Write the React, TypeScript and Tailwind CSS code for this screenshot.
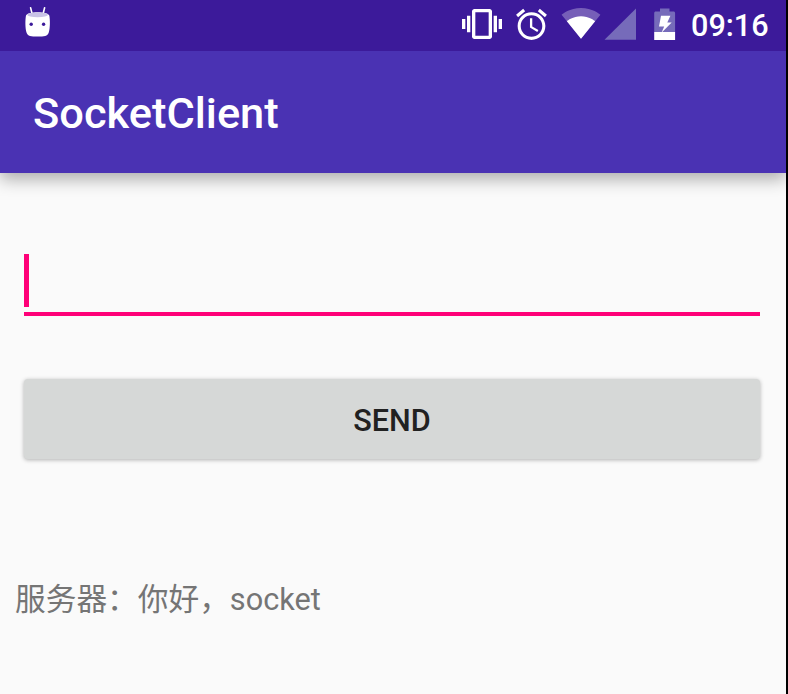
function StatusBar() {
  return (
    <header className="flex h-[51px] items-start bg-[#3c1a9a]">
      <svg className="ml-[24px] mt-[6px] h-[32px] w-[27px]" viewBox="24 6 27 32">
        <path d="M30.6 7.8l1.3 5.2M44.6 7.8l-1.3 5.2" stroke="#fff" strokeWidth="1.6" strokeLinecap="round" />
        <path d="M26 15.500c2-4.200 21.300-4.200 23.300 0 .9 4.500.9 13-.6 17.300-1 3.300-4.500 3.800-11.100 3.800s-10-.5-11-3.800c-1.500-4.300-1.500-12.800-.6-17.300z" fill="#fff" />
        <ellipse cx="37.600" cy="14.800" rx="10.400" ry="2.400" fill="#c9c3e6" />
        <circle cx="31.200" cy="24.300" r="1.700" fill="#3c1a9a" />
        <circle cx="43.600" cy="24.300" r="1.700" fill="#3c1a9a" />
      </svg>
      <svg className="ml-[411px] mt-[4px] size-[40px]" viewBox="0 0 24 24" fill="#fff">
        <path d="M0 15h2V9H0v6zm3 2h2V7H3v10zm19-8v6h2V9h-2zm-3 8h2V7h-2v10zM16.5 3h-9C6.670 3 6 3.670 6 4.500v15c0 .83.67 1.500 1.500 1.500h9c.83 0 1.500-.67 1.500-1.500v-15c0-.83-.67-1.500-1.500-1.500zM16 19H8V5h8v14z" />
      </svg>
      <svg className="ml-[11px] mt-[6px] size-[37px]" viewBox="0 0 24 24" fill="#fff">
        <path d="M22 5.720l-4.600-3.860-1.290 1.530 4.600 3.860L22 5.720zM7.880 3.390L6.600 1.860 2 5.710l1.290 1.530 4.590-3.850zM12.500 8H11v6l4.750 2.850.75-1.230-4-2.370V8zM12 4c-4.970 0-9 4.030-9 9s4.020 9 9 9c4.970 0 9-4.030 9-9s-4.030-9-9-9zm0 16c-3.870 0-7-3.130-7-7s3.130-7 7-7 7 3.130 7 7-3.130 7-7 7z" />
      </svg>
      <svg className="ml-[11px] mt-[3px] size-[40px]" viewBox="0 0 24 24" fill="#fff">
        <path fillOpacity=".3" d="M12.010 21.490L23.640 7c-.45-.34-4.930-4-11.640-4C5.280 3 .81 6.660.36 7l11.630 14.490.01.01.01-.01z" />
        <path d="M3.530 10.950l8.460 10.540.01.01.01-.01 8.460-10.540C20.040 10.620 16.810 8 12 8c-4.810 0-8.040 2.620-8.470 2.950z" />
      </svg>
      <svg className="ml-[3px] mt-[8px] h-[32px] w-[32px]" viewBox="604 8 32 32">
        <path d="M604.500 39.700H636V8.400z" fill="#766bba" />
      </svg>
      <svg className="ml-[18px] mt-[8px] h-[32px] w-[22px]" viewBox="654 8 22 32">
        <path d="M660 8.600h9.500v3h4c1 0 1.600.6 1.600 1.500V32.200H654.200V13.100c0-.9.600-1.500 1.500-1.500H660z" fill="#766bba" />
        <path d="M654.200 32h20.900v8h-20.900z" fill="#fff" />
        <path d="M661 15.800h9.400l-3.100 6.600h4.400l-10.200 10.400 2.700-6.300H659z" fill="#fff" />
      </svg>
      <time className="ml-[15px] mt-[7px] text-[30.6px] font-medium leading-[38px] text-white">09:16</time>
    </header>
  );
}

export default function App() {
  return (
    <div className="h-[694px] w-[788px] bg-black pr-[2px] font-[Roboto,'Noto_Sans_CJK_SC',sans-serif]">
      <div className="h-full overflow-hidden bg-[#fafafa]">
        <div className="relative bg-[#4a32b3] shadow-[0_6px_16px_rgba(0,0,0,0.32)]">
          <StatusBar />
          <div className="flex h-[122px] items-center pl-[33px] pt-[4px]">
            <h1 className="text-[43.4px] font-medium leading-[52px] text-white">SocketClient</h1>
          </div>
        </div>
        <main>
          <div className="ml-[24px] mt-[81px] h-[62px] w-[736px] border-b-4 border-[#ff0078]">
            <div className="h-[53px] w-[5px] bg-[#ff0078]" />
          </div>
          <button className="ml-[24px] mt-[63px] flex h-[80px] w-[736px] items-center justify-center rounded-[4px] bg-[#d6d8d7] pt-[4px] text-[30.6px] font-medium text-[#212121] shadow-[0_1px_4px_rgba(0,0,0,0.3)]">
            SEND
          </button>
          <p className="ml-[15px] mt-[118px] text-[30.7px] leading-[46px] text-[#757575]">服务器：你好，socket</p>
        </main>
      </div>
    </div>
  );
}
